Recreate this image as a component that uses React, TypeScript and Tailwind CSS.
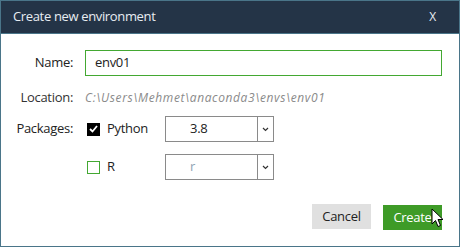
import React from 'react';

const font = { fontFamily: '"Open Sans", "Noto Sans", sans-serif' };

const Chevron: React.FC = () => (
  <svg width="7" height="5" viewBox="0 0 7 5" fill="none">
    <path d="M1 1 L3.5 3.5 L6 1" stroke="#333" strokeWidth="1.2" />
  </svg>
);

const Select: React.FC<{ value: string; muted?: boolean }> = ({ value, muted }) => (
  <div className="flex w-[109px] h-[26px] border border-[#8a8a8a] bg-white">
    <div className={`flex-1 flex items-center pl-[24px] text-[13px] ${muted ? 'text-[#8fa4b4]' : 'text-[#222]'}`}>
      {value}
    </div>
    <div className="w-[16px] border-l border-[#8a8a8a] flex items-center justify-center">
      <Chevron />
    </div>
  </div>
);

const App: React.FC = () => {
  return (
    <div className="w-[460px] h-[247px] border border-[#4a7589] bg-white flex flex-col text-[#222] tracking-[-0.3px]" style={font}>
      {/* Title bar */}
      <div className="h-[33px] bg-[#243447] border-b border-[#4a7589] flex items-center justify-between pl-[12px] pr-[23px]">
        <span className="text-[13px] text-[#e8edf2] tracking-[-0.35px]">Create new environment</span>
        <span className="text-[12px] text-[#e8edf2]">X</span>
      </div>

      {/* Body */}
      <div className="flex-1 flex flex-col pr-[17px]">
        <div className="flex items-center mt-[16px] h-[26px]">
          <span className="w-[72px] text-right text-[13px]">Name:</span>
          <div className="ml-[12px] flex-1 h-[26px] border border-[#43a832] flex items-center pl-[9px] text-[13px]">
            env01
          </div>
        </div>

        <div className="flex items-center mt-[14px] h-[16px]">
          <span className="w-[72px] text-right text-[13px] text-[#333]">Location:</span>
          <span className="ml-[12px] text-[12px] italic text-[#8a8a8a] tracking-[0.6px]">C:\Users\Mehmet\anaconda3\envs\env01</span>
        </div>

        <div className="flex items-center mt-[10px] h-[26px]">
          <span className="w-[72px] text-right text-[13px]">Packages:</span>
          <div className="ml-[14px] w-[13px] h-[13px] bg-black flex items-center justify-center">
            <svg width="9" height="8" viewBox="0 0 9 8" fill="none">
              <path d="M1 4 L3.5 6.5 L8 1" stroke="#fff" strokeWidth="1.8" />
            </svg>
          </div>
          <span className="ml-[7px] w-[58px] text-[13px]">Python</span>
          <Select value="3.8" />
        </div>

        <div className="flex items-center mt-[12px] h-[26px]">
          <span className="w-[72px]" />
          <div className="ml-[14px] w-[13px] h-[13px] border border-[#43a832] bg-white" />
          <span className="ml-[7px] w-[58px] text-[13px]">R</span>
          <Select value="r" muted />
        </div>

        <div className="flex justify-end gap-[12px] mt-[24px]">
          <button className="w-[59px] h-[25px] bg-[#e0e0e0] text-[13px] text-[#222]">Cancel</button>
          <div className="relative">
            <button className="w-[59px] h-[25px] bg-[#3e9b27] text-[13px] text-white">Create</button>
            <svg className="absolute left-[48px] top-[4px]" width="14" height="21" viewBox="0 0 14 21">
              <path d="M1 1 L1 16 L4.5 12.5 L7 18.5 L9.5 17.5 L7 11.5 L12 11.5 Z" fill="#fff" stroke="#000" strokeWidth="1" />
            </svg>
          </div>
        </div>
      </div>
    </div>
  );
};

export default App;
